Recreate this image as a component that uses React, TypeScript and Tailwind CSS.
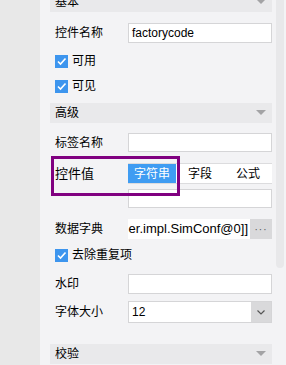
import React from 'react'

const FONT = { fontFamily: '"Liberation Sans", "Noto Sans CJK SC", sans-serif' }

function Header({ title, className = '' }: { title: string; className?: string }) {
  return (
    <div className={`flex h-[20px] items-center justify-between bg-[#e9e9eb] pl-[5px] pr-[6px] text-[12px] text-black ${className}`}>
      <span>{title}</span>
      <svg width="10" height="6" viewBox="0 0 10 6">
        <path d="M0 0 L10 0 L5 5 Z" fill="#a3a3a5" />
      </svg>
    </div>
  )
}

function Check({ label, className = '' }: { label: string; className?: string }) {
  return (
    <div className={`flex h-[20px] items-center gap-[4px] pl-[5px] text-[12px] text-black ${className}`}>
      <span className="flex h-[13px] w-[13px] items-center justify-center bg-[#3d95ee]">
        <svg width="11" height="11" viewBox="0 0 11 11">
          <path d="M2 5.5 L4.5 8 L9.5 2.5" stroke="#fff" strokeWidth="1.6" fill="none" />
        </svg>
      </span>
      <span>{label}</span>
    </div>
  )
}

function Row({ label, children, className = '' }: { label: string; children?: React.ReactNode; className?: string }) {
  return (
    <div className={`flex items-center pl-[5px] text-[12px] text-black ${className}`}>
      <span className="w-[73px] shrink-0">{label}</span>
      <div className="min-w-0 flex-1">{children}</div>
    </div>
  )
}

function Input({ value = '', h = 'h-[20px]' }: { value?: string; h?: string }) {
  return (
    <div className={`flex ${h} items-center overflow-hidden whitespace-nowrap border border-[#d5d5d7] bg-white px-[3px] text-[12px] text-black`}>
      {value}
    </div>
  )
}

export default function App() {
  return (
    <div className="flex h-[365px] w-[286px] overflow-hidden bg-[#e8e8e8]" style={FONT}>
      <div className="w-[40px] shrink-0" />
      <div className="relative flex-1 bg-[#f3f3f5]">
        {/* scrollbar thumb */}
        <div className="absolute right-[2px] top-0 h-[268px] w-[8px] rounded-b-[4px] bg-[#e8e8ea]" />

        <div className="flex w-[232px] flex-col pl-[10px]">
          <Header title="基本" className="-mt-[8px]" />

          <Row label="控件名称" className="mt-[11px]">
            <Input value="factorycode" />
          </Row>
          <Check label="可用" className="mt-[8px]" />
          <Check label="可见" className="mt-[5px]" />

          <Header title="高级" className="mt-[7px]" />

          <Row label="标签名称" className="mt-[10px]">
            <Input h="h-[19px]" />
          </Row>

          <div className="relative mt-[11px] flex pl-[5px] text-[12px] text-black">
            <span className="w-[73px] shrink-0 pt-[1px] text-[13px]">控件值</span>
            <div className="flex h-[21px] flex-1 items-stretch border-y border-[#dcdcde] bg-white">
              <div className="flex flex-1 items-center justify-center bg-[#3f9cf2] text-white">字符串</div>
              <div className="flex flex-1 items-center justify-center">字段</div>
              <div className="flex flex-1 items-center justify-center">公式</div>
            </div>
            <div className="absolute left-[1px] top-[-7px] z-10 h-[40px] w-[129px] border-[3px] border-[#800080]" />
          </div>

          <div className="mt-[5px] pl-[78px]">
            <Input h="h-[19px]" />
          </div>

          <Row label="数据字典" className="mt-[11px]">
            <div className="flex h-[20px]">
              <div className="flex min-w-0 flex-1 items-center justify-end overflow-hidden whitespace-nowrap bg-white pr-[2px] text-[13px] text-black">
                er.impl.SimConf@0]]
              </div>
              <div className="flex w-[22px] shrink-0 items-center justify-center bg-[#d9d9db] text-[10px] tracking-[1px] text-[#555]">
                ···
              </div>
            </div>
          </Row>

          <Check label="去除重复项" className="mt-[6px]" />

          <Row label="水印" className="mt-[9px]">
            <Input />
          </Row>

          <Row label="字体大小" className="mt-[7px]">
            <div className="flex h-[22px] border border-[#d5d5d7] bg-white">
              <div className="flex flex-1 items-center pl-[3px] text-[12px] text-black">12</div>
              <div className="flex w-[20px] items-center justify-center bg-[#d9d9db]">
                <svg width="8" height="5" viewBox="0 0 8 5">
                  <path d="M0.5 0.5 L4 4 L7.5 0.5" stroke="#555" strokeWidth="1.2" fill="none" />
                </svg>
              </div>
            </div>
          </Row>

          <Header title="校验" className="mt-[21px]" />
        </div>
      </div>
    </div>
  )
}
